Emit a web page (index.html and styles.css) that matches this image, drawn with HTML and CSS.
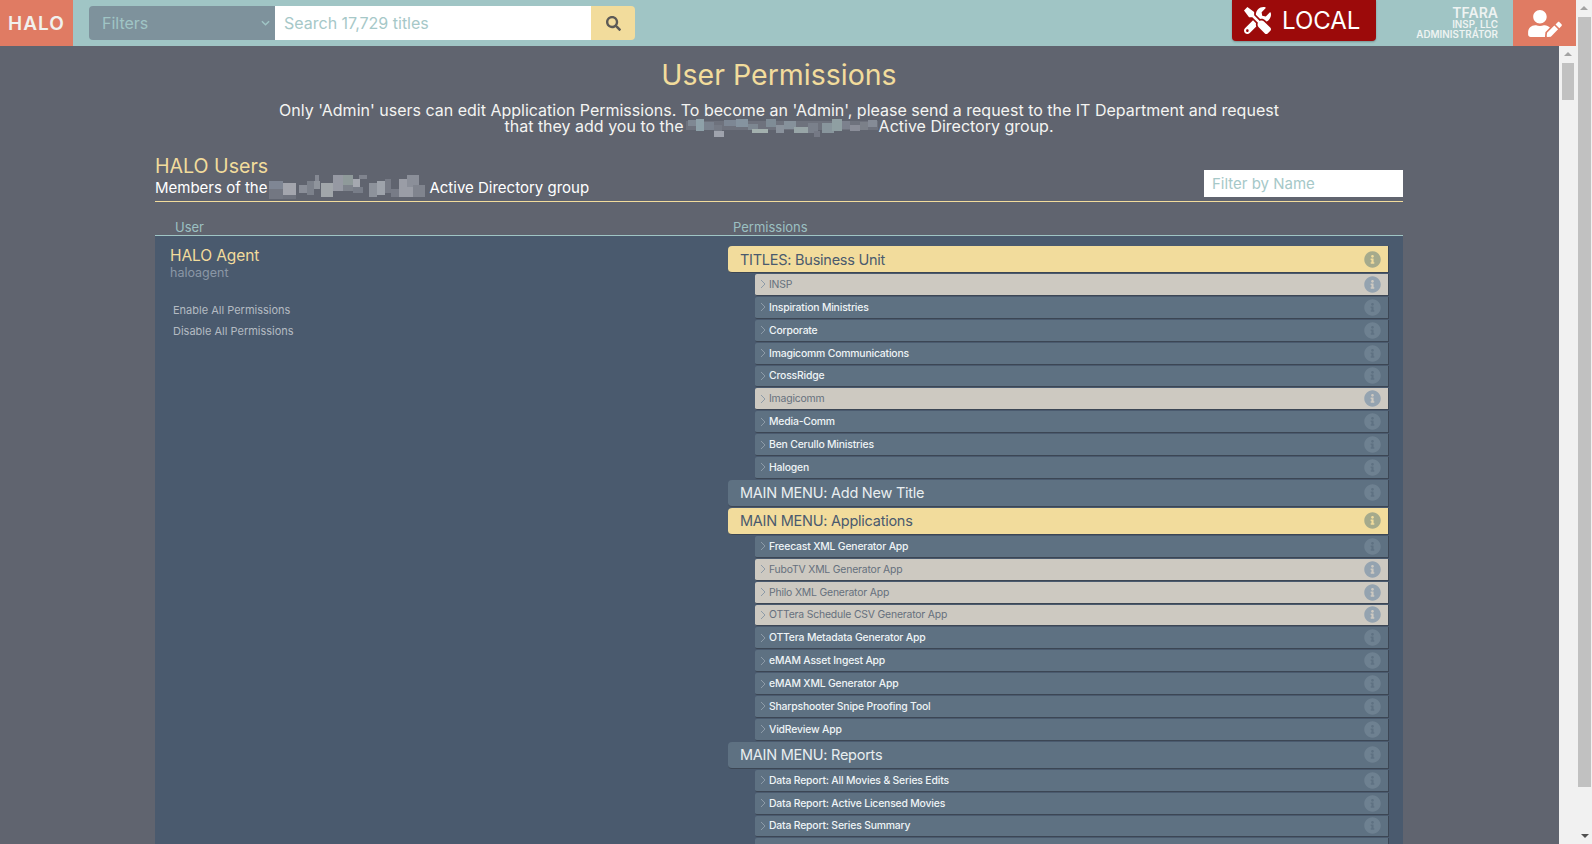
FILE: index.html
```html
<!DOCTYPE html>
<html lang="en">
<head>
<meta charset="utf-8">
<title>User Permissions</title>
<link rel="stylesheet" href="styles.css">
</head>
<body>
<svg class="defs" width="0" height="0"><defs>
<symbol id="info" viewBox="0 0 512 512"><path d="M256 8C119 8 8 119.1 8 256c0 137 111 248 248 248s248-111 248-248C504 119.1 393 8 256 8zm0 110c23.2 0 42 18.8 42 42s-18.8 42-42 42-42-18.8-42-42 18.8-42 42-42zm56 254c0 6.6-5.4 12-12 12h-88c-6.6 0-12-5.4-12-12v-24c0-6.6 5.4-12 12-12h12v-64h-12c-6.6 0-12-5.4-12-12v-24c0-6.6 5.4-12 12-12h64c6.6 0 12 5.4 12 12v100h12c6.6 0 12 5.4 12 12v24z"/></symbol>
<symbol id="chev" viewBox="0 0 6 10"><path d="M1 1l4 4-4 4" fill="none" stroke="currentColor" stroke-width="1"/></symbol>
</defs></svg>
<div class="window">
  <div class="app">
    <header class="topbar">
      <div class="logo">HALO</div>
      <div class="searchgroup">
        <div class="filters"><span>Filters</span><svg class="caret" viewBox="0 0 10 6"><path d="M1 1l4 4 4-4" fill="none" stroke="currentColor" stroke-width="1.6"/></svg></div>
        <div class="searchbox">Search 17,729 titles</div>
        <div class="searchbtn"><svg viewBox="0 0 512 512"><path d="M505 442.7L405.3 343c-4.5-4.5-10.6-7-17-7H372c27.6-35.3 44-79.7 44-128C416 93.1 322.9 0 208 0S0 93.1 0 208s93.1 208 208 208c48.3 0 92.7-16.4 128-44v16.3c0 6.4 2.5 12.5 7 17l99.7 99.7c9.4 9.4 24.6 9.4 33.9 0l28.3-28.3c9.4-9.4 9.4-24.6.1-34zM208 336c-70.7 0-128-57.2-128-128 0-70.7 57.2-128 128-128 70.7 0 128 57.2 128 128 0 70.7-57.2 128-128 128z"/></svg></div>
      </div>
      <div class="env"><svg viewBox="0 0 512 512"><path d="M501.1 395.7L384 278.6c-23.1-23.1-57.6-27.6-85.4-13.9L192 158.1V96L64 0 0 64l96 128h62.1l106.6 106.6c-13.6 27.8-9.2 62.3 13.9 85.4l117.1 117.1c14.6 14.6 38.2 14.6 52.7 0l52.7-52.7c14.5-14.6 14.5-38.2 0-52.7zM331.7 225c28.3 0 54.9 11 74.9 31l19.4 19.4c15.8-6.9 30.8-16.5 43.8-29.5 37.1-37.1 49.7-89.3 37.9-136.7-2.2-9-13.5-12.1-20.1-5.5l-74.4 74.4-67.9-11.3L334 98.9l74.4-74.4c6.6-6.6 3.4-17.9-5.7-20.2-47.4-11.7-99.6.9-136.6 37.9-28.5 28.5-41.9 66.1-41.2 103.6l82.1 82.1c8.1-1.9 16.5-2.9 24.7-2.9zm-103.9 82l-56.7-56.7L18.7 402.8c-25 25-25 65.5 0 90.5s65.5 25 90.5 0l123.6-123.6c-7.6-19.9-9.9-41.6-5-62.7zM64 472c-13.2 0-24-10.8-24-24 0-13.3 10.7-24 24-24s24 10.7 24 24c0 13.2-10.7 24-24 24z"/></svg><span>LOCAL</span></div>
      <div class="who"><div class="who-name">TFARA</div><div class="who-sub">INSP, LLC</div><div class="who-sub">ADMINISTRATOR</div></div>
      <div class="avatar"><svg viewBox="0 0 640 512"><path d="M224 256c70.7 0 128-57.3 128-128S294.7 0 224 0 96 57.3 96 128s57.3 128 128 128zm89.6 32h-16.7c-22.2 10.2-46.9 16-72.9 16s-50.6-5.8-72.9-16h-16.7C60.2 288 0 348.2 0 422.4V464c0 26.5 21.5 48 48 48h274.9c-2.4-6.8-3.4-14-2.6-21.3l6.8-60.9 1.2-11.1 7.9-7.9 77.3-77.3c-24.5-27.7-60-45.5-99.9-45.5zm45.3 145.3l-6.8 61c-1.1 10.2 7.5 18.8 17.6 17.6l60.9-6.8 137.9-137.9-71.7-71.7-137.9 137.8zM633 268.9L595.1 231c-9.3-9.3-24.5-9.3-33.8 0l-37.8 37.8-4.1 4.1 71.8 71.7 41.8-41.8c9.3-9.4 9.3-24.5 0-33.9z"/></svg></div>
    </header>
    <div class="body">
      <main class="content">
        <h1 class="title">User Permissions</h1>
        <p class="notice">Only 'Admin' users can edit Application Permissions. To become an 'Admin', please send a request to the IT Department and request<br>that they add you to the<span class="mask mask-a"><svg viewBox="0 0 192 20" width="192" height="20" shape-rendering="crispEdges"><rect x="0" y="4" width="192" height="9" fill="#6e727d"/><rect x="2" y="3" width="8" height="6" fill="#7f8893"/><rect x="10" y="2" width="8" height="12" fill="#8ea1a9"/><rect x="18" y="5" width="10" height="8" fill="#7a828e"/><rect x="28" y="14" width="10" height="6" fill="#9fa3ad"/><rect x="28" y="8" width="8" height="6" fill="#757a85"/><rect x="38" y="3" width="12" height="6" fill="#7d8794"/><rect x="50" y="2" width="12" height="8" fill="#85939f"/><rect x="62" y="7" width="10" height="6" fill="#7d8791"/><rect x="66" y="12" width="16" height="4" fill="#a3b0ae"/><rect x="80" y="2" width="10" height="8" fill="#7f8c96"/><rect x="90" y="8" width="8" height="8" fill="#8a929c"/><rect x="98" y="4" width="12" height="8" fill="#86919b"/><rect x="108" y="10" width="14" height="6" fill="#98a5a7"/><rect x="122" y="6" width="10" height="10" fill="#7a808b"/><rect x="128" y="14" width="6" height="6" fill="#757985"/><rect x="136" y="6" width="12" height="10" fill="#88959c"/><rect x="146" y="2" width="10" height="12" fill="#8f9fa2"/><rect x="156" y="4" width="8" height="8" fill="#7c818d"/><rect x="164" y="8" width="10" height="6" fill="#8a8d98"/><rect x="174" y="5" width="8" height="8" fill="#7b8089"/><rect x="182" y="3" width="9" height="7" fill="#858b96"/></svg></span>Active Directory group.</p>
        <section class="wrap">
          <div class="usershead">
            <div>
              <h2 class="users-title">HALO Users</h2>
              <div class="users-sub">Members of the<span class="mask mask-b"><svg viewBox="0 0 160 24" width="160" height="24" shape-rendering="crispEdges"><rect x="0" y="6" width="14" height="8" fill="#7f8694"/><rect x="0" y="14" width="14" height="10" fill="#737782"/><rect x="14" y="8" width="13" height="12" fill="#a3a5ad"/><rect x="14" y="20" width="13" height="4" fill="#6f737e"/><rect x="30" y="10" width="8" height="8" fill="#8a8e98"/><rect x="38" y="6" width="7" height="14" fill="#7c818b"/><rect x="46" y="0" width="4" height="6" fill="#858993"/><rect x="45" y="6" width="6" height="8" fill="#8f949c"/><rect x="52" y="8" width="12" height="14" fill="#a1a6aa"/><rect x="64" y="0" width="10" height="16" fill="#9699a3"/><rect x="74" y="0" width="10" height="10" fill="#8f9a9a"/><rect x="74" y="10" width="10" height="6" fill="#7e838c"/><rect x="84" y="4" width="7" height="8" fill="#a5a8b0"/><rect x="84" y="12" width="10" height="6" fill="#787d88"/><rect x="90" y="0" width="8" height="4" fill="#80848e"/><rect x="100" y="8" width="8" height="14" fill="#8d929b"/><rect x="108" y="6" width="8" height="14" fill="#9ea3ab"/><rect x="116" y="4" width="6" height="14" fill="#777b86"/><rect x="122" y="14" width="8" height="8" fill="#787c87"/><rect x="130" y="4" width="14" height="18" fill="#9a9da6"/><rect x="138" y="0" width="12" height="12" fill="#8b8f99"/><rect x="144" y="10" width="12" height="12" fill="#80848e"/></svg></span>Active Directory group</div>
            </div>
            <div class="namefilter">Filter by Name</div>
          </div>
          <div class="cols"><div class="col-user">User</div><div class="col-perm">Permissions</div></div>
          <div class="panel">
            <div class="user">
              <div class="user-name">HALO Agent</div>
              <div class="user-login">haloagent</div>
              <div class="user-act first">Enable All Permissions</div>
              <div class="user-act">Disable All Permissions</div>
            </div>
            <div class="perms">
              <div class="grp on"><span>TITLES: Business Unit</span><svg class="i"><use href="#info"/></svg></div>
              <div class="row off"><svg class="c"><use href="#chev"/></svg><span>INSP</span><svg class="i"><use href="#info"/></svg></div>
              <div class="row"><svg class="c"><use href="#chev"/></svg><span>Inspiration Ministries</span><svg class="i"><use href="#info"/></svg></div>
              <div class="row"><svg class="c"><use href="#chev"/></svg><span>Corporate</span><svg class="i"><use href="#info"/></svg></div>
              <div class="row"><svg class="c"><use href="#chev"/></svg><span>Imagicomm Communications</span><svg class="i"><use href="#info"/></svg></div>
              <div class="row"><svg class="c"><use href="#chev"/></svg><span>CrossRidge</span><svg class="i"><use href="#info"/></svg></div>
              <div class="row off"><svg class="c"><use href="#chev"/></svg><span>Imagicomm</span><svg class="i"><use href="#info"/></svg></div>
              <div class="row"><svg class="c"><use href="#chev"/></svg><span>Media-Comm</span><svg class="i"><use href="#info"/></svg></div>
              <div class="row"><svg class="c"><use href="#chev"/></svg><span>Ben Cerullo Ministries</span><svg class="i"><use href="#info"/></svg></div>
              <div class="row"><svg class="c"><use href="#chev"/></svg><span>Halogen</span><svg class="i"><use href="#info"/></svg></div>
              <div class="grp"><span>MAIN MENU: Add New Title</span><svg class="i"><use href="#info"/></svg></div>
              <div class="grp on"><span>MAIN MENU: Applications</span><svg class="i"><use href="#info"/></svg></div>
              <div class="row"><svg class="c"><use href="#chev"/></svg><span>Freecast XML Generator App</span><svg class="i"><use href="#info"/></svg></div>
              <div class="row off"><svg class="c"><use href="#chev"/></svg><span>FuboTV XML Generator App</span><svg class="i"><use href="#info"/></svg></div>
              <div class="row off"><svg class="c"><use href="#chev"/></svg><span>Philo XML Generator App</span><svg class="i"><use href="#info"/></svg></div>
              <div class="row off"><svg class="c"><use href="#chev"/></svg><span>OTTera Schedule CSV Generator App</span><svg class="i"><use href="#info"/></svg></div>
              <div class="row"><svg class="c"><use href="#chev"/></svg><span>OTTera Metadata Generator App</span><svg class="i"><use href="#info"/></svg></div>
              <div class="row"><svg class="c"><use href="#chev"/></svg><span>eMAM Asset Ingest App</span><svg class="i"><use href="#info"/></svg></div>
              <div class="row"><svg class="c"><use href="#chev"/></svg><span>eMAM XML Generator App</span><svg class="i"><use href="#info"/></svg></div>
              <div class="row"><svg class="c"><use href="#chev"/></svg><span>Sharpshooter Snipe Proofing Tool</span><svg class="i"><use href="#info"/></svg></div>
              <div class="row"><svg class="c"><use href="#chev"/></svg><span>VidReview App</span><svg class="i"><use href="#info"/></svg></div>
              <div class="grp"><span>MAIN MENU: Reports</span><svg class="i"><use href="#info"/></svg></div>
              <div class="row"><svg class="c"><use href="#chev"/></svg><span>Data Report: All Movies &amp; Series Edits</span><svg class="i"><use href="#info"/></svg></div>
              <div class="row"><svg class="c"><use href="#chev"/></svg><span>Data Report: Active Licensed Movies</span><svg class="i"><use href="#info"/></svg></div>
              <div class="row"><svg class="c"><use href="#chev"/></svg><span>Data Report: Series Summary</span><svg class="i"><use href="#info"/></svg></div>
              <div class="row"></div>
            </div>
          </div>
        </section>
      </main>
      <aside class="innerbar"><div class="arrow"></div><div class="thumb"></div></aside>
    </div>
  </div>
  <aside class="outerbar"><div class="arrow"></div><div class="thumb"></div><div class="arrow down"></div></aside>
</div>
</body>
</html>
```
FILE: styles.css
```css
* { box-sizing: border-box; }
html, body { margin: 0; height: 100%; overflow: hidden; }
body { font-family: Inter, "Liberation Sans", sans-serif; background: #60646f; color: #fff; }
.defs { position: absolute; }
.window { display: flex; height: 844px; }
.app { width: 1576px; display: flex; flex-direction: column; height: 844px; }
.topbar { height: 46px; flex: none; background: #a0c5c5; display: flex; align-items: flex-start; }
.logo { width: 73px; height: 46px; background: #e07b63; color: #f1f1ee; font-size: 19px; font-weight: 600; letter-spacing: 1px; display: flex; align-items: center; justify-content: center; }
.searchgroup { display: flex; margin: 6px 0 0 16px; height: 34px; }
.filters { width: 186px; background: #7e929c; color: #a0c5c5; border-radius: 4px 0 0 4px; display: flex; align-items: center; justify-content: space-between; padding: 0 5px 0 13px; font-size: 16px; }
.caret { width: 9px; height: 6px; }
.searchbox { width: 316px; background: #fff; color: #a6c8c8; font-size: 16px; display: flex; align-items: center; padding-left: 9px; }
.searchbtn { width: 44px; background: #f2dc9c; border-radius: 0 4px 4px 0; display: flex; align-items: center; justify-content: center; }
.searchbtn svg { width: 15px; height: 15px; fill: #5c5a56; }
.env { margin-left: 597px; width: 144px; height: 41px; background: #9c0a0a; border-radius: 0 0 4px 4px; display: flex; align-items: center; padding-left: 12px; gap: 11px; font-size: 24px; color: #fff; box-shadow: 0 1px 2px rgba(0,0,0,.25); }
.env svg { width: 27px; height: 27px; fill: #fff; }
.who { width: 122px; margin-right: 15px; text-align: right; padding-top: 6px; color: #eef3f2; font-weight: 600; }
.who-name { font-size: 14px; line-height: 14px; }
.who-sub { font-size: 9.8px; line-height: 10px; }
.avatar { width: 63px; height: 46px; background: #e07b63; display: flex; align-items: center; justify-content: center; }
.avatar svg { width: 34px; height: 27px; fill: #fff; }
.body { flex: 1; display: flex; min-height: 0; }
.content { width: 1559px; padding: 0 156px 0 155px; overflow: hidden; }
.title { margin: 14px 0 0; font-size: 28.5px; line-height: 30px; font-weight: 400; color: #f2dc9c; text-align: center; }
.notice { margin: 12px 0 0; font-size: 16px; line-height: 16px; color: #f4f4f2; text-align: center; }
.mask { display: inline-block; position: relative; height: 16px; vertical-align: top; }
.mask svg { position: absolute; left: 0; display: block; filter: blur(.5px); }
.mask-a { width: 195px; }
.mask-a svg { top: -1px; left: 2px; }
.mask-b { width: 160px; height: 19px; margin-right: 2px; }
.mask-b svg { top: -3px; left: 2px; }
.wrap { margin-top: 20px; }
.usershead { display: flex; justify-content: space-between; align-items: flex-end; height: 48px; border-bottom: 1px solid #f2dc9c; padding-bottom: 4px; }
.users-title { margin: 0; font-size: 19.6px; line-height: 24px; font-weight: 400; color: #f2dc9c; }
.users-sub { font-size: 15px; line-height: 19px; color: #fff; }
.namefilter { width: 199px; height: 27px; background: #fff; color: #a6c8c8; font-size: 15px; padding-left: 8px; display: flex; align-items: center; }
.cols { display: flex; height: 34px; border-bottom: 1px solid #a0c5c5; align-items: flex-end; color: #9cc0c2; font-size: 13px; line-height: 16px; }
.col-user { width: 578px; padding-left: 20px; }
.panel { background: #4a5a6e; display: flex; min-height: 700px; padding-top: 10px; }
.user { width: 573px; padding-left: 15px; }
.user-name { font-size: 15.5px; line-height: 19px; color: #f2dc9c; letter-spacing: -.1px; }
.user-login { font-size: 12.5px; line-height: 15px; color: #8a97a6; }
.user-act { margin-left: 3px; font-size: 11px; line-height: 21px; color: #b4bac2; }
.user-act.first { margin-top: 20px; }
.perms { width: 661px; }
.grp { height: 27px; margin-bottom: 1px; display: flex; align-items: center; justify-content: space-between; padding: 0 7px 0 12px; background: #5e7182; color: #e9eef0; font-size: 14.5px; letter-spacing: -.25px; border-radius: 4px 0 0 4px; border-bottom: 1px solid #3c4654; border-right: 1px solid #3c4654; }
.grp.on { background: #f2dc9c; color: #4a5a6e; }
.row { height: 21.88px; margin-bottom: 1px; margin-left: 27px; display: flex; align-items: center; padding: 0 7px 0 5px; background: #5e7182; color: #eef4f6; font-size: 10.4px; letter-spacing: -.18px; font-weight: 500; border-radius: 2px 0 0 2px; border-bottom: 1px solid #3c4654; border-right: 1px solid #3c4654; }
.row.off { background: #cdc9c1; color: #66707d; font-weight: 400; }
.row span { flex: 1; }
.c { width: 6px; height: 10px; margin-right: 3px; color: #8d9ba8; }
.i { width: 17px; height: 17px; flex: none; }
.grp.on .i { fill: #5a7a7e; opacity: .5; }
.grp:not(.on) .i, .row:not(.off) .i { fill: #7a8c9b; opacity: .6; }
.row.off .i { fill: #6f8aa5; opacity: .6; }
.innerbar { width: 17px; background: #f1f1f1; padding: 0 2px 0 3px; }
.outerbar { width: 16px; background: #f1f1f1; padding: 0 1px 0 2px; display: flex; flex-direction: column; justify-content: flex-start; }
.arrow { height: 17px; position: relative; }
.arrow::after { content: ""; position: absolute; left: 2px; top: 6px; border-left: 4px solid transparent; border-right: 4px solid transparent; border-bottom: 4px solid #a3a3a3; }
.arrow.down { margin-top: auto; }
.arrow.down::after { border-bottom: 0; border-top: 4px solid #505050; top: 7px; left: 3px; }
.thumb { background: #c1c1c1; }
.innerbar .thumb { height: 37px; }
.outerbar .thumb { height: 770px; }
```
